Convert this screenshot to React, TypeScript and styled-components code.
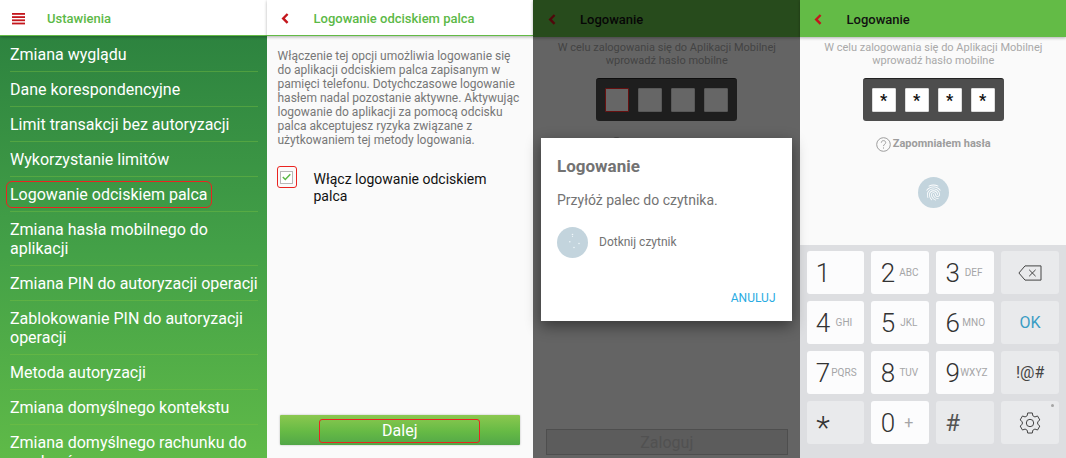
import React from "react";
import styled, { createGlobalStyle } from "styled-components";
import { MdFingerprint } from "react-icons/md";

const GlobalStyle = createGlobalStyle`
  *, *::before, *::after { box-sizing: border-box; }
  body {
    margin: 0;
    background: #fafafa;
    font-family: Roboto, "Noto Sans", sans-serif;
  }
  button, input { font-family: inherit; }
  h1, h2, p, ul { margin: 0; padding: 0; }
`;

const RED = "#c4161c";
const MARK = "#ea2421";
const GREEN = "#63bb46";

const Page = styled.main`
  display: grid;
  grid-template-columns: repeat(4, minmax(0, 1fr));
  height: 100vh;
  overflow: hidden;
`;

const Screen = styled.section`
  position: relative;
  display: flex;
  flex-direction: column;
  min-height: 0;
  background: #fafafa;
`;

const Header = styled.header<{ $filled?: boolean }>`
  flex: none;
  display: flex;
  align-items: center;
  gap: 10px;
  height: ${(p) => (p.$filled ? 37 : 36)}px;
  padding-top: 2px;
  background: ${(p) => (p.$filled ? GREEN : "#ffffff")};
  border-bottom: ${(p) => (p.$filled ? "none" : `1px solid ${GREEN}`)};
  box-shadow: 0 1px 3px rgba(0, 0, 0, 0.3);
  color: ${(p) => (p.$filled ? "#111111" : "#5cb947")};
  z-index: 1;
`;

const IconButton = styled.button`
  display: flex;
  justify-content: center;
  width: 37px;
  padding: 0;
  border: 0;
  background: none;
  color: ${RED};
`;

const ScreenTitle = styled.h1`
  font-size: 13px;
  line-height: 16px;
  font-weight: 500;
  white-space: nowrap;
`;

const Menu = styled.nav`
  flex: 1;
  min-height: 0;
  overflow: hidden;
  padding: 1px 0 0 10px;
  background: linear-gradient(#2d833f, #43a047 50%, #5fba48);
`;

const MenuList = styled.ul`
  list-style: none;
`;

const MenuItem = styled.li`
  padding-top: 8px;
  font-size: 16px;
  line-height: 19px;

  &::after {
    content: "";
    display: block;
    height: 1px;
    margin: 7px 9px 0 0;
    background: rgba(125, 195, 65, 0.4);
  }
`;

const MenuLink = styled.a<{ $marked?: boolean }>`
  display: inline-block;
  vertical-align: top;
  color: #ffffff;
  text-decoration: none;
  border-radius: 2px;
  outline: ${(p) => (p.$marked ? `1px solid ${MARK}` : "none")};
  outline-offset: 3px;
`;

const Form = styled.form`
  flex: 1;
  display: flex;
  flex-direction: column;
  padding: 13px 10px 13px;
`;

const Description = styled.p`
  padding-left: 1px;
  color: #777777;
  font-size: 12px;
  line-height: 14px;
  white-space: nowrap;
`;

const Option = styled.label`
  display: flex;
  align-items: flex-start;
  gap: 17px;
  margin-top: 19px;
  color: #111111;
  font-size: 14px;
  line-height: 17px;
`;

const CheckFrame = styled.span`
  position: relative;
  display: grid;
  place-items: center;
  width: 20px;
  height: 22px;
  border: 1px solid ${MARK};
  border-radius: 3px;

  svg {
    position: absolute;
    pointer-events: none;
  }
`;

const Checkbox = styled.input`
  appearance: none;
  width: 13px;
  height: 13px;
  margin: 0;
  border: 1px solid #b8b8b8;
  background: #ffffff;
`;

const OptionText = styled.span`
  padding-top: 5px;
`;

const NextButton = styled.button`
  display: flex;
  justify-content: center;
  align-items: center;
  height: 30px;
  margin: auto 3px 0;
  padding: 2px 0 0;
  border: 0;
  border-radius: 1px;
  background: linear-gradient(#8bc84f, #66ba45 55%, #52a748);
  box-shadow: 0 0 2px rgba(0, 0, 0, 0.3);
  color: #ffffff;
`;

const NextLabel = styled.span`
  width: 67%;
  border: 1px solid ${MARK};
  border-radius: 3px;
  font-size: 16px;
  line-height: 22px;
`;

const Login = styled.div`
  flex: 1;
  display: flex;
  flex-direction: column;
  align-items: center;
  padding: 4px 12px 3px 13px;
`;

const Hint = styled.p`
  color: #a9a9a9;
  font-size: 11px;
  line-height: 13px;
  text-align: center;
`;

const PinPad = styled.div`
  display: flex;
  gap: 9px;
  margin-top: 11px;
  padding: 9px;
  border-radius: 3px;
  background: #4d4d4d;
  border-top: 1px solid #222222;
`;

const PinInput = styled.input<{ $active?: boolean }>`
  width: 24px;
  height: 24px;
  padding: 1px 0 0;
  border: 1px solid ${(p) => (p.$active ? "#ff2a2a" : "#dddddd")};
  border-radius: 1px;
  background: #ffffff;
  color: #111111;
  font-size: 16px;
  font-weight: 700;
  line-height: 16px;
  text-align: center;
`;

const ForgotLink = styled.a`
  display: flex;
  align-items: center;
  gap: 2px;
  margin-top: 15px;
  color: #9d9d9d;
  font-size: 11px;
  line-height: 16px;
  font-weight: 700;
  text-decoration: none;
`;

const ReaderBadge = styled.span<{ $top?: number }>`
  flex: none;
  display: grid;
  place-items: center;
  width: 31px;
  height: 31px;
  margin-top: ${(p) => p.$top ?? 0}px;
  border-radius: 50%;
  background: #c3d4dd;
  color: #ffffff;
`;

const LoginButton = styled.button`
  align-self: stretch;
  height: 26px;
  margin-top: auto;
  padding: 2px 0 0;
  border: 1px solid #c4c4c4;
  background: #e6e6e6;
  color: #cacaca;
  font-size: 16px;
  line-height: 22px;
`;

const Backdrop = styled.div`
  position: absolute;
  inset: 0;
  z-index: 2;
  display: flex;
  align-items: center;
  padding: 0 8px;
  background: rgba(0, 0, 0, 0.6);
`;

const Dialog = styled.div`
  flex: 1;
  display: flex;
  flex-direction: column;
  padding: 18px 16px 15px;
  background: #ffffff;
  box-shadow: 0 5px 14px rgba(0, 0, 0, 0.45);
  color: #737373;
`;

const DialogTitle = styled.h2`
  font-size: 17px;
  line-height: 20px;
  font-weight: 700;
`;

const DialogText = styled.p`
  margin-top: 16px;
  font-size: 14px;
  line-height: 16px;
`;

const ReaderRow = styled.div`
  display: flex;
  align-items: center;
  gap: 11px;
  margin-top: 19px;
  font-size: 12px;
  line-height: 16px;
`;

const CancelButton = styled.button`
  align-self: flex-end;
  margin-top: 32px;
  padding: 0;
  border: 0;
  background: none;
  color: #29abe2;
  font-size: 12px;
  line-height: 16px;
`;

const Keyboard = styled.div`
  flex: none;
  display: grid;
  grid-template-columns: repeat(4, minmax(0, 1fr));
  grid-auto-rows: 43px;
  gap: 7px;
  padding: 6px 7px 14px;
  background: #dddee1;
`;

const Key = styled.button<{ $muted?: boolean }>`
  display: flex;
  align-items: center;
  padding: 0 7px 0 9px;
  border: 0;
  border-radius: 3px;
  background: ${(p) => (p.$muted ? "#e9eaec" : "#fcfcfd")};
  color: #333333;
`;

const ActionKey = styled(Key)<{ $accent?: boolean }>`
  position: relative;
  justify-content: center;
  padding: 0;
  color: ${(p) => (p.$accent ? "#3a9cc4" : "#444444")};
  font-size: 16px;
`;

const Digit = styled.span`
  flex: none;
  width: 15px;
  font-size: 26px;
  font-weight: 300;
  line-height: 30px;
`;

const HashSign = styled(Digit)`
  color: #555555;
  font-size: 24px;
  font-weight: 400;
`;

const StarSign = styled(Digit)`
  padding-top: 8px;
  font-size: 32px;
`;

const Letters = styled.span<{ $large?: boolean }>`
  flex: 1;
  display: flex;
  justify-content: center;
  color: #a5a5a7;
  font-size: ${(p) => (p.$large ? 16 : 10)}px;
`;

const Dot = styled.span`
  position: absolute;
  top: 3px;
  right: 5px;
  width: 3px;
  height: 3px;
  border-radius: 50%;
  background: #a5a5a5;
`;

const menuItems = [
  "Zmiana wyglądu",
  "Dane korespondencyjne",
  "Limit transakcji bez autoryzacji",
  "Wykorzystanie limitów",
  "Logowanie odciskiem palca",
  "Zmiana hasła mobilnego do aplikacji",
  "Zmiana PIN do autoryzacji operacji",
  "Zablokowanie PIN do autoryzacji operacji",
  "Metoda autoryzacji",
  "Zmiana domyślnego kontekstu",
  "Zmiana domyślnego rachunku do przelewów",
];

const MenuIcon = () => (
  <svg width="13" height="12" viewBox="0 0 13 12" fill="currentColor" aria-hidden="true">
    <rect y="0" width="13" height="1.8" />
    <rect y="3.2" width="13" height="1.8" />
    <rect y="6.4" width="13" height="1.8" />
    <rect y="9.6" width="13" height="1.8" />
  </svg>
);

const BackIcon = () => (
  <svg width="8" height="11" viewBox="0 0 8 11" fill="none" stroke="currentColor" strokeWidth="2.4" aria-hidden="true">
    <path d="M6.6 1 2.2 5.4l4.4 4.4" />
  </svg>
);

const CheckIcon = () => (
  <svg width="9" height="8" viewBox="0 0 9 8" fill="none" stroke="#5cb947" strokeWidth="1.5" aria-hidden="true">
    <path d="M.8 4 3.3 6.5 8.3 1.2" />
  </svg>
);

const HelpIcon = () => (
  <svg width="15" height="15" viewBox="0 0 15 15" fill="none" stroke="currentColor" strokeWidth="1" aria-hidden="true">
    <circle cx="7.5" cy="7.5" r="6.8" />
    <path d="M5.3 5.7c0-1.3 1-2.1 2.2-2.1s2.2.8 2.2 2c0 1.6-2.2 1.7-2.2 3.5" />
    <path d="M7.5 10.4v1.2" />
  </svg>
);

const ReaderDots = () => (
  <svg width="31" height="31" viewBox="0 0 31 31" fill="#eef6f9" aria-hidden="true">
    <circle cx="15.5" cy="7.5" r=".8" />
    <circle cx="15.5" cy="9.5" r=".6" />
    <circle cx="12.8" cy="14.8" r=".8" />
    <circle cx="22" cy="16.5" r=".8" />
    <circle cx="17" cy="20.5" r=".8" />
  </svg>
);

const BackspaceIcon = () => (
  <svg width="24" height="16" viewBox="0 0 24 16" fill="none" stroke="currentColor" strokeWidth="1" aria-hidden="true">
    <path d="M7 .9h16v14.2H7L.9 8z" />
    <path d="m11.2 4.8 6.4 6.4m0-6.4-6.4 6.4" />
  </svg>
);

const gearPath = (() => {
  const at = (radius: number, degrees: number) => {
    const angle = ((degrees - 90) * Math.PI) / 180;
    return `${(11 + radius * Math.cos(angle)).toFixed(2)} ${(11 + radius * Math.sin(angle)).toFixed(2)}`;
  };
  const points: string[] = [];
  for (let tooth = 0; tooth < 6; tooth++) {
    const a = tooth * 60;
    points.push(at(7.8, a - 21), at(10.3, a - 13), at(10.3, a + 13), at(7.8, a + 21));
  }
  return `M${points.join("L")}Z`;
})();

const GearIcon = () => (
  <svg width="22" height="22" viewBox="0 0 22 22" fill="none" stroke="currentColor" strokeWidth="1" strokeLinejoin="round" aria-hidden="true">
    <path d={gearPath} />
    <circle cx="11" cy="11" r="3.7" />
  </svg>
);

const NumberKey = ({ digit, letters }: { digit: string; letters?: string }) => (
  <Key type="button">
    <Digit>{digit}</Digit>
    {letters && <Letters $large={letters === "+"}>{letters}</Letters>}
  </Key>
);

const LoginBody = ({ filled, children }: { filled?: boolean; children?: React.ReactNode }) => (
  <Login>
    <Hint>
      W celu zalogowania się do Aplikacji Mobilnej
      <br />
      wprowadź hasło mobilne
    </Hint>
    <PinPad role="group" aria-label="Hasło mobilne">
      {[1, 2, 3, 4].map((n) => (
        <PinInput
          key={n}
          type="text"
          maxLength={1}
          aria-label={`Znak ${n}`}
          defaultValue={filled ? "*" : ""}
          $active={!filled && n === 1}
        />
      ))}
    </PinPad>
    <ForgotLink href="#haslo">
      <HelpIcon />
      Zapomniałem hasła
    </ForgotLink>
    {children}
  </Login>
);

const LoginHeader = () => (
  <Header $filled>
    <IconButton type="button" aria-label="Wstecz">
      <BackIcon />
    </IconButton>
    <ScreenTitle>Logowanie</ScreenTitle>
  </Header>
);

export default function App() {
  return (
    <>
      <GlobalStyle />
      <Page>
        <Screen>
          <Header>
            <IconButton type="button" aria-label="Menu">
              <MenuIcon />
            </IconButton>
            <ScreenTitle>Ustawienia</ScreenTitle>
          </Header>
          <Menu>
            <MenuList>
              {menuItems.map((item) => (
                <MenuItem key={item}>
                  <MenuLink href="#ustawienia" $marked={item === "Logowanie odciskiem palca"}>
                    {item}
                  </MenuLink>
                </MenuItem>
              ))}
            </MenuList>
          </Menu>
        </Screen>

        <Screen>
          <Header>
            <IconButton type="button" aria-label="Wstecz">
              <BackIcon />
            </IconButton>
            <ScreenTitle>Logowanie odciskiem palca</ScreenTitle>
          </Header>
          <Form onSubmit={(e) => e.preventDefault()}>
            <Description>
              Włączenie tej opcji umożliwia logowanie się
              <br />
              do aplikacji odciskiem palca zapisanym w
              <br />
              pamięci telefonu. Dotychczasowe logowanie
              <br />
              hasłem nadal pozostanie aktywne. Aktywując
              <br />
              logowanie do aplikacji za pomocą odcisku
              <br />
              palca akceptujesz ryzyka związane z<br />
              użytkowaniem tej metody logowania.
            </Description>
            <Option>
              <CheckFrame>
                <Checkbox type="checkbox" defaultChecked />
                <CheckIcon />
              </CheckFrame>
              <OptionText>
                Włącz logowanie odciskiem
                <br />
                palca
              </OptionText>
            </Option>
            <NextButton type="submit">
              <NextLabel>Dalej</NextLabel>
            </NextButton>
          </Form>
        </Screen>

        <Screen>
          <LoginHeader />
          <LoginBody>
            <LoginButton type="button">Zaloguj</LoginButton>
          </LoginBody>
          <Backdrop>
            <Dialog role="dialog" aria-labelledby="dialog-title">
              <DialogTitle id="dialog-title">Logowanie</DialogTitle>
              <DialogText>Przyłóż palec do czytnika.</DialogText>
              <ReaderRow>
                <ReaderBadge>
                  <ReaderDots />
                </ReaderBadge>
                Dotknij czytnik
              </ReaderRow>
              <CancelButton type="button">ANULUJ</CancelButton>
            </Dialog>
          </Backdrop>
        </Screen>

        <Screen>
          <LoginHeader />
          <LoginBody filled>
            <ReaderBadge $top={25}>
              <MdFingerprint size={19} />
            </ReaderBadge>
          </LoginBody>
          <Keyboard>
            <NumberKey digit="1" />
            <NumberKey digit="2" letters="ABC" />
            <NumberKey digit="3" letters="DEF" />
            <ActionKey type="button" $muted aria-label="Usuń">
              <BackspaceIcon />
            </ActionKey>
            <NumberKey digit="4" letters="GHI" />
            <NumberKey digit="5" letters="JKL" />
            <NumberKey digit="6" letters="MNO" />
            <ActionKey type="button" $muted $accent>
              OK
            </ActionKey>
            <NumberKey digit="7" letters="PQRS" />
            <NumberKey digit="8" letters="TUV" />
            <NumberKey digit="9" letters="WXYZ" />
            <ActionKey type="button" $muted>
              !@#
            </ActionKey>
            <Key type="button" $muted>
              <StarSign>*</StarSign>
            </Key>
            <NumberKey digit="0" letters="+" />
            <Key type="button" $muted>
              <HashSign>#</HashSign>
            </Key>
            <ActionKey type="button" $muted aria-label="Ustawienia klawiatury">
              <GearIcon />
              <Dot />
            </ActionKey>
          </Keyboard>
        </Screen>
      </Page>
    </>
  );
}
